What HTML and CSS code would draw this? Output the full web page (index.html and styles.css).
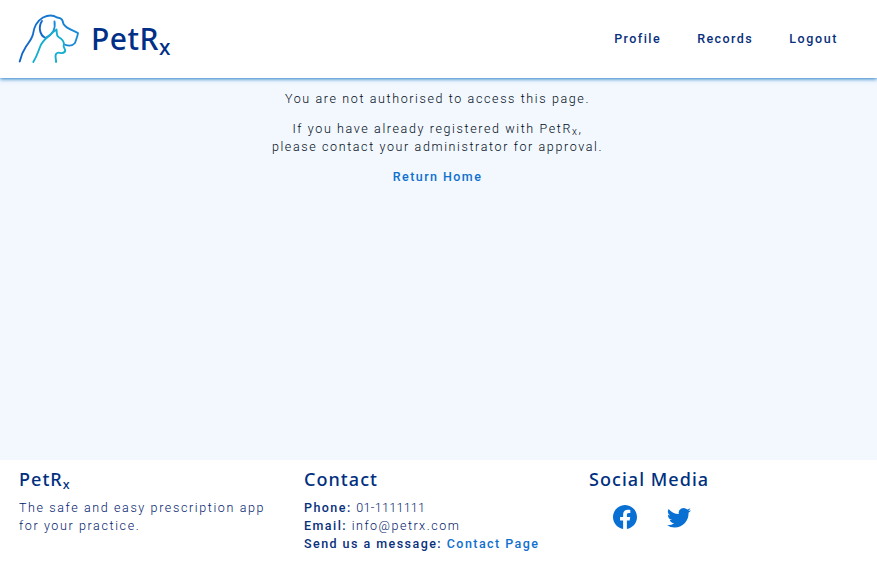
FILE: index.html
```html
<!DOCTYPE html>
<html lang="en">
<head>
<meta charset="utf-8">
<title>PetRx</title>
<link rel="stylesheet" href="styles.css">
</head>
<body>
<header class="header">
  <a class="brand">
    <svg class="logo" width="64" height="52" viewBox="0 0 64 52" fill="none" stroke-width="1.9" stroke-linecap="round" stroke-linejoin="round">
      <defs>
        <linearGradient id="dog" x1="0" y1="0" x2="1" y2="0"><stop offset="0" stop-color="#1264c8"/><stop offset="1" stop-color="#1a8bd8"/></linearGradient>
      </defs>
      <path stroke="url(#dog)" d="M1.7 48.5C3 43 5 38 8 33.5C11 29 14 26 15 21C16 14 19 8 25 4.5C31 1.500 36 2.500 39 4.500C44 5 44.500 7 45.500 11C48 15.500 54 17 60 20C59.500 24 58 26.500 57 30C54 33.500 50 33 46.500 31.500"/>
      <path stroke="url(#dog)" d="M24 8C20.500 13 21 22 27.500 25C33 22.500 38 17 36.500 8.500"/>
      <path stroke="#14aed0" d="M15.300 49C19 43 20 39 22 34C25 26 31 24 33.500 20.500C35 18.500 37 18 38.500 16.500C39 20 38 22 40.500 24C44 26 46 28 46 31.500C44 34 48 35 47 38.500C43 43 41 37 38 41C36.500 44 38.500 46 38 49"/>
    </svg>
    <span class="brand-name">PetR<sub>x</sub></span>
  </a>
  <nav class="nav"><a>Profile</a><a>Records</a><a>Logout</a></nav>
</header>
<main class="main">
  <p>You are not authorised to access this page.</p>
  <p>If you have already registered with PetR<sub>x</sub>,<br>please contact your administrator for approval.</p>
  <p><a class="link">Return Home</a></p>
</main>
<footer class="footer">
  <section>
    <h2>PetR<sub>x</sub></h2>
    <p>The safe and easy prescription app<br>for your practice.</p>
  </section>
  <section>
    <h2>Contact</h2>
    <p><b>Phone:</b> <span class="phone">01-1111111</span><br><b>Email:</b> <span class="email">info@petrx.com</span><br><b>Send us a message:</b> <a class="link">Contact Page</a></p>
  </section>
  <section>
    <h2>Social Media</h2>
    <div class="social">
      <svg width="24" height="24" viewBox="0 0 16 16" fill="currentColor"><path d="M16 8.049c0-4.446-3.582-8.05-8-8.05C3.58 0-.002 3.603-.002 8.05c0 4.017 2.926 7.347 6.75 7.951v-5.625h-2.03V8.05H6.75V6.275c0-2.017 1.195-3.131 3.022-3.131.876 0 1.791.157 1.791.157v1.98h-1.009c-.993 0-1.303.621-1.303 1.258v1.51h2.218l-.354 2.326H9.25V16c3.824-.604 6.75-3.934 6.75-7.951z"/></svg>
      <svg width="24" height="24" viewBox="0 0 16 16" fill="currentColor"><path d="M5.026 15c6.038 0 9.341-5.003 9.341-9.334 0-.14 0-.282-.006-.422A6.685 6.685 0 0 0 16 3.542a6.658 6.658 0 0 1-1.889.518 3.301 3.301 0 0 0 1.447-1.817 6.533 6.533 0 0 1-2.087.793A3.286 3.286 0 0 0 7.875 6.03a9.325 9.325 0 0 1-6.767-3.429 3.289 3.289 0 0 0 1.018 4.382A3.323 3.323 0 0 1 .64 6.575v.045a3.288 3.288 0 0 0 2.632 3.218 3.203 3.203 0 0 1-.865.115 3.23 3.23 0 0 1-.614-.057 3.283 3.283 0 0 0 3.067 2.277A6.588 6.588 0 0 1 .78 13.58a6.32 6.32 0 0 1-.78-.045A9.344 9.344 0 0 0 5.026 15z"/></svg>
    </div>
  </section>
</footer>
</body>
</html>
```
FILE: styles.css
```css
* { box-sizing: border-box; }
body {
  margin: 0;
  height: 561px;
  display: flex;
  flex-direction: column;
  overflow: hidden;
  font: 300 12.5px/18px Roboto, sans-serif;
  letter-spacing: 1.62px;
  color: #000a18;
  background: #fff;
}
p { margin: 0; }
sub { line-height: 0; }
b, .link { font-weight: 500; letter-spacing: 1.45px; }
.link { color: #1070ce; }
.header {
  height: 78px;
  flex: none;
  display: flex;
  justify-content: space-between;
  align-items: center;
  padding: 0 39px 0 18px;
  background: #fff;
  box-shadow: 0 1px 4px #1c78c4;
  position: relative;
}
.brand { display: flex; align-items: center; gap: 9px; color: #002f87; }
.brand-name { font: 500 30px/40px "Noto Sans", sans-serif; letter-spacing: 0.5px; }
.brand-name sub, h2 sub { font-size: 70%; vertical-align: -0.22em; }
.nav { display: flex; gap: 36px; font-weight: 500; color: #08307c; letter-spacing: 1.45px; }
.nav a:last-child { letter-spacing: 1.6px; }
.main {
  flex: 1;
  background: #f2f8fe;
  text-align: center;
  padding: 12px 2px 0 0;
}
.main p + p { margin-top: 12px; }
.main sub { font-size: 10px; vertical-align: -0.2em; }
.footer {
  height: 101px;
  flex: none;
  padding: 7px 19px 0;
  display: grid;
  grid-template-columns: 285px 285px 1fr;
}
.footer p { color: #00206c; }
.footer .phone { letter-spacing: 0.3px; }
.footer .email { letter-spacing: 1.5px; }
h2 {
  margin: 0 0 8px;
  font: 500 18px/24px "Noto Sans", sans-serif;
  letter-spacing: 1.05px;
  color: #002f80;
}
.footer b { color: #08307c; }
.social { display: flex; gap: 30px; padding: 6px 0 0 24px; color: #0870d2; }
```
